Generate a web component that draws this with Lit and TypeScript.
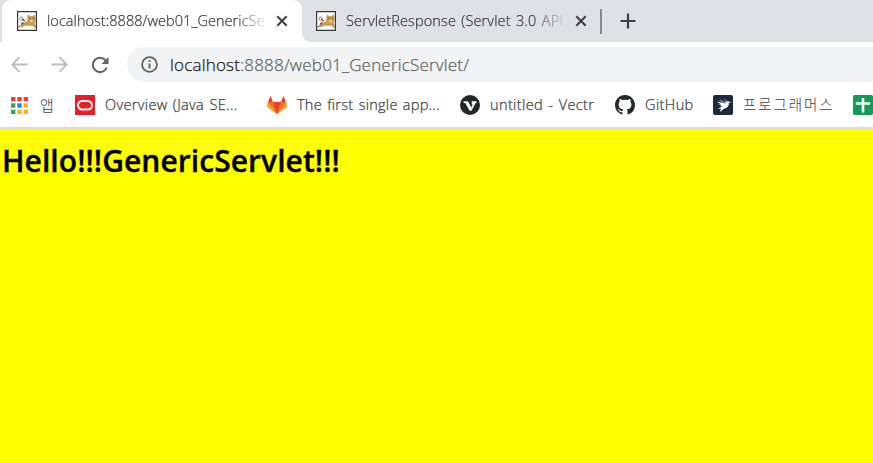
import { LitElement, html, css, svg } from "lit";
import { customElement } from "lit/decorators.js";
import { styleMap } from "lit/directives/style-map.js";

const tomcat = html`<svg class="icon" viewBox="0 0 20 20">
  <path d="M.6.6h18.8v18.8H.6z" fill="#fff" stroke="#343a3c" stroke-width="1.2"/>
  <path d="M5.5 10.8C2.6 9.6 2.3 5.6 4.4 5.8c1.6.2.2 2 2 3.2" fill="none" stroke="#8b9498" stroke-width="1"/>
  <path d="M4 13.5l2.5-2M5.2 8l2.6 2" stroke="#343a3c" stroke-width="1.1"/>
  <path d="M1 16l3.5-2.2 3.4-2.2 2.6-1.2.6-6.4 2.3 1.6h2.2l2.1-1.6.7 4.8-1.2 3.2.6 2 1.4 2-1.2.5-2.8-2.4-3 .2-3-.2-3.4 1.4-3.6.6z" fill="#d5a044" stroke="#946b29" stroke-width=".5"/>
  <path d="M12 6.8l1.7 1M16.8 6.6l-1.4 1.2" stroke="#4d421f" stroke-width=".8"/>
  <path d="M13 9.6h3l-1.4 1.8z" fill="#fff0ce"/>
</svg>`;

const close = html`<svg class="close" viewBox="0 0 12 12"><path d="M1.3 1.3l9.4 9.4M10.7 1.3l-9.4 9.4" stroke="#3c4043" stroke-width="2"/></svg>`;

const apps = html`<svg class="apps" viewBox="0 0 17 17">${[
  "#ea4335", "#ea4335", "#ea4335", "#34a853", "#1e88f5", "#fbb40b", "#34a853", "#fbb40b", "#fbb40b",
].map((c, i) => svg`<rect x=${(i % 3) * 6.3} y=${Math.floor(i / 3) * 6.3} width="4.4" height="4.4" fill=${c}/>`)}</svg>`;

const oracle = html`<svg class="icon" viewBox="0 0 20 20"><path d="M0 0h20v20H0z" fill="#ed1c24"/><rect x="3" y="6" width="14" height="8.6" rx="4.3" fill="none" stroke="#fff" stroke-width="2"/></svg>`;

const gitlab = html`<svg class="icon" viewBox="0 0 20 20">
  <path d="M10 19L.5 12 0 10.4 1.1 7h17.8L20 10.4l-.5 1.6z" fill="#fc6d26"/>
  <path d="M1.1 7L0 10.4.5 12 10 19zM18.9 7L20 10.4l-.5 1.6L10 19z" fill="#fca326"/>
  <path d="M1.1 7H6l4 12zM18.9 7H14l-4 12z" fill="#fc6d26"/>
  <path d="M6 7h8l-4 12zM1.1 7L3.6.8 6 7zM18.9 7L16.4.8 14 7z" fill="#e24329"/>
</svg>`;

const vectr = html`<svg class="icon" viewBox="0 0 20 20"><circle cx="10" cy="10" r="10" fill="#20262a"/><path d="M3.6 6.3h4.2l3.6 6 1.3-2.4-1-.4V6.3h4.9v1.8h-1l-4.1 7.6H9.6L5.2 8.1H3.6z" fill="#fff"/></svg>`;

const github = html`<svg class="icon" viewBox="0 0 16 16"><path fill="#24292e" fill-rule="evenodd" d="M8 0C3.58 0 0 3.58 0 8c0 3.54 2.29 6.53 5.47 7.59.4.07.55-.17.55-.38 0-.19-.01-.82-.01-1.49-2.01.37-2.53-.49-2.69-.94-.09-.23-.48-.94-.82-1.13-.28-.15-.68-.52-.01-.53.63-.01 1.08.58 1.23.82.72 1.21 1.87.87 2.33.66.07-.52.28-.87.51-1.07-1.78-.2-3.64-.89-3.64-3.95 0-.87.31-1.59.82-2.15-.08-.2-.36-1.02.08-2.12 0 0 .67-.21 2.2.82.64-.18 1.32-.27 2-.27s1.36.09 2 .27c1.53-1.04 2.2-.82 2.2-.82.44 1.1.16 1.92.08 2.12.51.56.82 1.27.82 2.15 0 3.07-1.87 3.75-3.65 3.95.29.25.54.73.54 1.48 0 1.07-.01 1.93-.01 2.2 0 .21.15.46.55.38A8.01 8.01 0 0 0 16 8c0-4.42-3.58-8-8-8z"/></svg>`;

const bird = html`<svg class="icon" viewBox="0 0 20 20"><rect width="20" height="20" rx="2" fill="#1d2a3d"/><path d="M6 3.2l6.5 4.2L11 3l3 3.6-1 2.4-8-3.4 3.4.2z" fill="#7d8996"/><path d="M3.8 6.4l8.4 2c.8-2 2.4-2.6 3.8-1.6l3.2.1-3.2.9c-.1 3.4-1.8 5.6-5 6L6.8 17l1.2-3.4-3 .4 4-2.8-3.4-1.6 2.6-.2z" fill="#fff"/></svg>`;

const sheet = html`<svg class="icon" viewBox="0 0 20 20"><rect width="20" height="20" rx="1.8" fill="#109d58"/><path d="M2.8 7.2h14.4v2.6H2.8zM8.7 3h2.6v14.4H8.7z" fill="#fff"/></svg>`;

interface Bookmark { icon: unknown; label: string; width: number; spacing: number; }

const bookmarks: Bookmark[] = [
  { icon: oracle, label: "Overview (Java SE...", width: 163, spacing: 0.35 },
  { icon: gitlab, label: "The first single app...", width: 164, spacing: 0.27 },
  { icon: vectr, label: "untitled - Vectr", width: 126, spacing: 0.38 },
  { icon: github, label: "GitHub", width: 69, spacing: 0.4 },
  { icon: bird, label: "프로그래머스", width: 111, spacing: 1.9 },
  { icon: sheet, label: "", width: 20, spacing: 0 },
];

@customElement("app-root")
export class AppRoot extends LitElement {
  static styles = css`
    :host { display: flex; flex-direction: column; width: 100%; height: 100vh; overflow: hidden;
      font-family: "Open Sans", "Noto Sans CJK KR", sans-serif; font-weight: 300; color: #3c4043; background: #fff; }
    svg { display: block; flex: none; }
    .icon { width: 20px; height: 20px; }
    .close { width: 12px; height: 12px; }
    .strip { display: flex; height: 42px; flex: none; background: #dee1e6; }
    .edge { width: 2px; }
    .tab { display: flex; align-items: center; height: 42px; box-sizing: border-box; padding-left: 15px; }
    .active { width: 300px; background: #fff; border-radius: 9px 9px 0 0; }
    .idle { width: 298px; padding-left: 14px; border-bottom-left-radius: 9px; background: #dee1e6; }
    .under { background: linear-gradient(#fff, #fff) 0 100% / 10px 10px no-repeat; }
    .title { width: 219px; margin: 0 10px; font-size: 14.5px; line-height: 22px; white-space: nowrap;
      -webkit-mask-image: linear-gradient(90deg, #000 188px, transparent 221px); }
    .title, .url, .mark span { -webkit-text-stroke: 0.25px currentColor; }
    .t1 { letter-spacing: 0.05px; }
    .t2 { letter-spacing: 0.13px; word-spacing: 1.5px; }
    .sep { width: 1.5px; height: 25px; margin-top: 9px; background: #85898e; }
    .plus { width: 16px; height: 16px; margin: 13px 0 0 18px; }
    .toolbar { display: flex; align-items: center; height: 45px; flex: none; padding-left: 11px; }
    .nav { width: 17px; height: 17px; margin-right: 23px; }
    .reload { width: 18px; height: 18px; margin-right: 18px; }
    .omni { display: flex; align-items: center; flex: 1; height: 35px; padding-left: 14px; border-radius: 18px 0 0 18px; background: #f1f3f4; }
    .info { width: 17px; height: 17px; margin-right: 12px; }
    .url { font-size: 17px; line-height: 24px; letter-spacing: 0.19px; color: #5f6368; white-space: nowrap; }
    .host { color: #202124; }
    .bar { display: flex; align-items: center; height: 36px; flex: none; padding: 0 0 4px 11px; border-bottom: 2px solid #dadce0; }
    .apps { width: 17px; height: 17px; }
    .apptext { flex: none; width: 35px; margin-left: 12px; font-size: 15px; }
    .mark { display: flex; align-items: center; flex: none; margin-right: 29px; gap: 10px; }
    .mark:last-child { margin-right: 0; }
    .mark span, .apptext { white-space: nowrap; line-height: 22px; }
    .mark span { font-size: 14.5px; word-spacing: 1.2px; }
    .mark span:lang(ko) { -webkit-text-stroke: 0; }
    .page { flex: 1; background: #ff0; }
    h1 { margin: 12px 0 0 2px; font-size: 30px; line-height: 40px; font-weight: 600; letter-spacing: 0.06px; color: #000; white-space: nowrap;
      -webkit-text-stroke: 0.35px #000; }
  `;

  render() {
    return html`
      <div class="strip">
        <div class="edge"></div>
        <div class="tab active">${tomcat}<div class="title t1">localhost:8888/web01_GenericSe</div>${close}</div>
        <div class="under"><div class="tab idle">${tomcat}<div class="title t2">ServletResponse (Servlet 3.0 API</div>${close}</div></div>
        <div class="sep"></div>
        <svg class="plus" viewBox="0 0 16 16"><path d="M8 .5v15M.5 8h15" stroke="#3c4043" stroke-width="2.2"/></svg>
      </div>
      <div class="toolbar">
        <svg class="nav" viewBox="0 0 17 17"><path d="M16.5 8.5H2M8.5 1.2L1.2 8.5l7.3 7.3" fill="none" stroke="#babcbe" stroke-width="1.8"/></svg>
        <svg class="nav" viewBox="0 0 17 17"><path d="M.5 8.5H15M8.5 1.2l7.3 7.3-7.3 7.3" fill="none" stroke="#babcbe" stroke-width="1.8"/></svg>
        <svg class="reload" viewBox="0 0 18 18"><path d="M15.7 11.5A7.2 7.2 0 1 1 14.8 4.6" fill="none" stroke="#5f6368" stroke-width="2"/><path d="M17.5 1v7h-7z" fill="#5f6368"/></svg>
        <div class="omni">
          <svg class="info" viewBox="0 0 17 17"><circle cx="8.5" cy="8.5" r="7.4" fill="none" stroke="#5f6368" stroke-width="1.8"/><path d="M8.5 4.2v1.9M8.5 7.4v5.2" stroke="#5f6368" stroke-width="1.9"/></svg>
          <div class="url"><span class="host">localhost</span>:8888/web01_GenericServlet/</div>
        </div>
      </div>
      <div class="bar">
        ${apps}<span class="apptext">앱</span>
        ${bookmarks.map((b) => html`<div class="mark" lang=${/[가-힣]/.test(b.label) ? "ko" : "en"} style=${styleMap({ width: `${b.width}px`, letterSpacing: `${b.spacing}px` })}>${b.icon}<span>${b.label}</span></div>`)}
      </div>
      <div class="page"><h1>Hello!!!GenericServlet!!!</h1></div>
    `;
  }
}
